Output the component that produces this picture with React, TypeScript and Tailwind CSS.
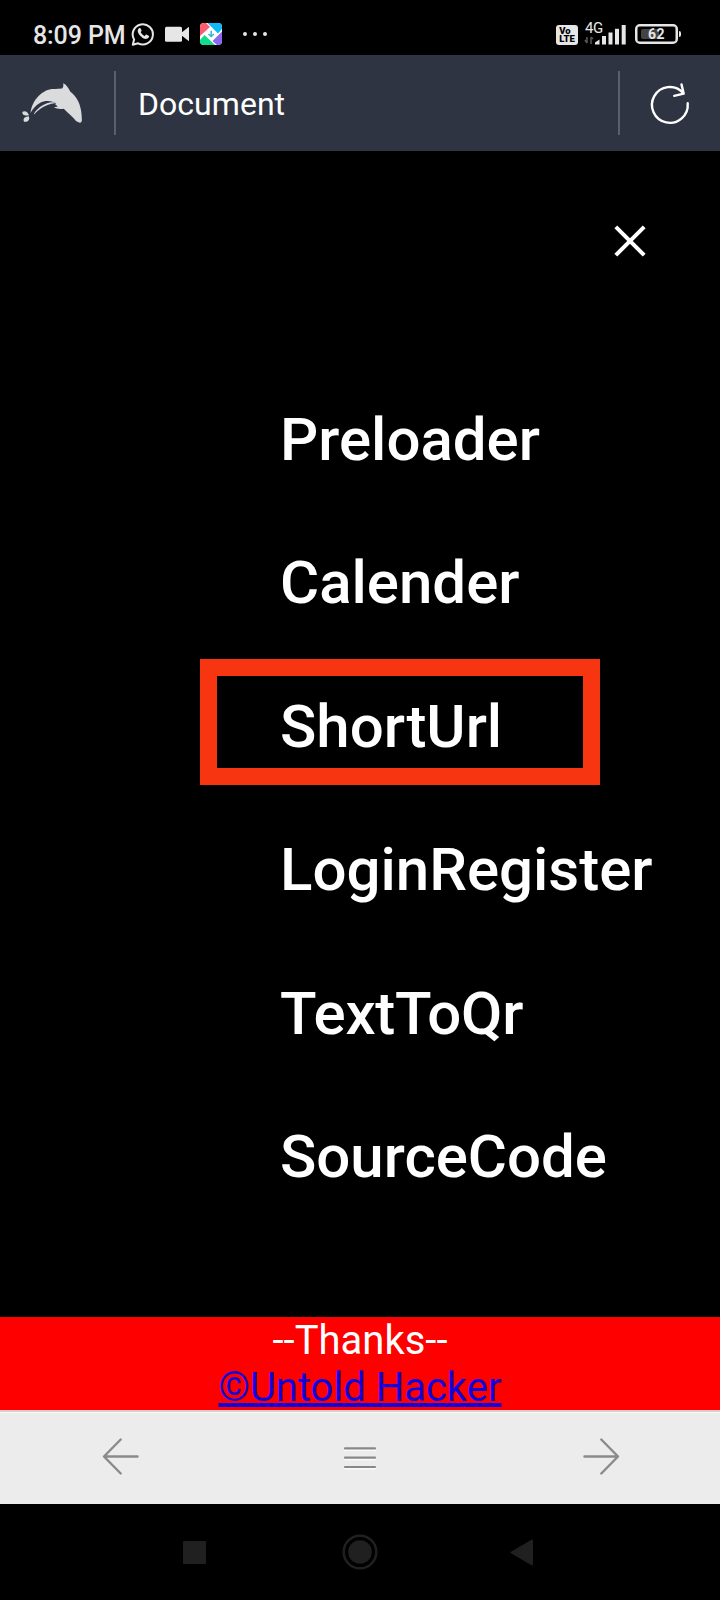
const links = ["Preloader", "Calender", "ShortUrl", "LoginRegister", "TextToQr", "SourceCode"];

function StatusBar() {
  return (
    <div className="flex h-[55px] shrink-0 items-start justify-between bg-black pl-[33px] pr-[39px] text-[#e6e6e6]">
      <div className="flex">
        <span className="mt-[21px] w-[98px] whitespace-nowrap text-[25px] leading-[29px] font-medium tracking-[-0.1px]">8:09 PM</span>
        <svg className="mt-5 h-[28px] w-[26px]" viewBox="131 20 26 28" fill="none">
          <path d="M132.800 44.700l1.300-5.200a10.100 10.100 0 1 1 4 3.800z" stroke="#e6e6e6" strokeWidth="2" strokeLinejoin="round" />
          <path d="M139.400 28.100c-3 2.200-1.500 5.200 1.100 8 3 3.200 6.400 4 8.300 1.200.6-.9.3-1.300-.2-1.600l-2.200-1.100c-1-.4-1.200 1.500-2 1.300-1.200-.4-3.400-2.500-3.800-3.800 0-.5 1.200-1 1-1.700l-1.100-2.200q-.4-.5-1.100-.1z" fill="#e6e6e6" />
        </svg>
        <svg className="mt-[26px] ml-2 h-4 w-6" viewBox="0 0 24 16" fill="#e6e6e6">
          <rect y="0.700" width="17" height="15" rx="1.500" />
          <path d="M16 7l8-6.200v14.400L16 9z" />
        </svg>
        <svg className="mt-[23px] ml-[11px] h-[22px] w-[22px]" viewBox="0 0 22 22">
          <defs>
            <clipPath id="share-clip"><rect width="22" height="22" rx="4" /></clipPath>
          </defs>
          <g clipPath="url(#share-clip)">
            <rect width="22" height="22" fill="#fff" />
            <path d="M0 0h6l4 4L0 13z" fill="#fb5d70" />
            <path d="M7.500 0H22v6l-4 4.500z" fill="#10baf8" />
            <path d="M22 8.500V22h-5l-4.500-4z" fill="#8b68f2" />
            <path d="M0 17l4.500-5L15 22H0z" fill="#10dc8b" />
            <path d="M11.200 7.700v5.500M8.500 11l2.700 2.500 2.700-2.500" fill="none" stroke="#32b8cb" strokeWidth="1.500" />
          </g>
        </svg>
        <svg className="mt-[31px] ml-5 h-[6px] w-[26px]" viewBox="0 0 26 6" fill="#e6e6e6">
          <circle cx="3" cy="3" r="2" /><circle cx="13" cy="3" r="2" /><circle cx="23" cy="3" r="2" />
        </svg>
      </div>
      <div className="flex">
        <div className="mt-[25px] flex h-[20px] w-[22px] flex-col items-center rounded-[3px] bg-[#e6e6e6] pt-[2px] text-[9.5px] leading-[8px] font-black text-black">
          <span className="-translate-x-[2px]">Vo</span><span>LTE</span>
        </div>
        <div className="relative ml-[6px] h-[55px] w-[43px]">
          <span className="absolute top-[20px] left-[1px] text-[15px] leading-[16px] tracking-[-0.5px]">4G</span>
          <svg className="mt-[24px] h-[22px] w-[43px]" viewBox="0 0 43 22" fill="#e6e6e6">
            <path d="M3 13v6M1 16l2 3M7 20v-7M9 15l-2-2" stroke="#555" strokeWidth="1.600" fill="none" />
            <path d="M11 20.500v-2l4.500-3v5z" />
            <rect x="18" y="12" width="4" height="8.500" />
            <rect x="24.500" y="8.500" width="4" height="12" />
            <rect x="31" y="4.800" width="4" height="15.700" />
            <rect x="37.700" y="1" width="4" height="19.500" />
          </svg>
        </div>
        <div className="relative mt-6 ml-[8px] flex h-5 w-[43px] items-center rounded-[5px] border-2 border-[#e6e6e6] pl-1 shadow-[inset_0_0_0_0.500px_#e6e6e6]">
          <div className="h-[10px] w-[18px] rounded-[2px] bg-[#444]" />
          <span className="absolute inset-0 text-center text-[14px] leading-[16px] font-bold tracking-[0.500px]">62</span>
        </div>
        <div className="mt-[31px] ml-px h-[6px] w-[2px] rounded-r bg-[#e6e6e6]" />
      </div>
    </div>
  );
}

function AddressBar() {
  return (
    <div className="flex h-24 shrink-0 items-center bg-[#2e3441]">
      <svg className="h-24 w-[114px]" viewBox="0 55 114 96" fill="#dadbdd">
        <path d="M30.500 113C32 99 44 88 55 89l7-.4c1.500-1.200 1.500-3 1.200-5.300 3.200 1.500 5 4.200 7 8.200 6.500 5 10.700 12.500 11.400 23.500l.2 3.500c.2 2-.1 4-1.200 4.100-1.600.3-3.100-.8-4.600-1.600-3-4.200-8-7.500-12.200-12.300-3.300.5-7.400.2-9.900-1.500l4-.7-3-2.500 1.500-.6c-4-2.400-11-3.500-16.500-.3-4.500 2.600-7 5.800-9.400 9.900z" />
        <path d="M34 113.500c4-6 9.500-9.800 16-11 3-.5 5.500-.3 8 .6-9 .3-17 3.900-24 11.400z" />
        <path d="M29 115.300c-1.500-4.500-4.500-4.600-6.600-3.500-.5 3 1.600 4.500 6.600 3.500z" />
        <path d="M28.700 116.200c1.700 3.800-1 6-4.700 5.500-1.600-3.700 1.300-5.100 4.700-5.500z" />
      </svg>
      <div className="h-16 w-[2px] bg-[#5a606b]" />
      <span className="ml-[22px] flex-1 pt-[1px] text-[32px] leading-[38px] tracking-[0.040px] text-white">Document</span>
      <div className="h-16 w-[2px] bg-[#5a606b]" />
      <svg className="h-24 w-[100px]" viewBox="620 55 100 96" fill="none" stroke="#fff" strokeWidth="2.400" strokeLinecap="round" strokeLinejoin="round">
        <path d="M687.700 103.300A17.900 17.900 0 1 1 682.900 92.600" />
        <path d="M681.500 84.400l2.200 9.300-9.500 2.100" />
      </svg>
    </div>
  );
}

function MenuOverlay() {
  return (
    <main className="flex h-[1166px] shrink-0 flex-col bg-black">
      <div className="flex h-[217px] justify-end pt-[74px] pr-[74px]">
        <svg className="h-8 w-8" viewBox="0 0 32 32" stroke="#fff" strokeWidth="4">
          <path d="M1.800 1.800l28.400 28.400M30.200 1.800L1.800 30.200" />
        </svg>
      </div>
      <nav className="flex flex-col pl-[280px]">
        {links.map((label) => (
          <a
            key={label}
            className={`relative h-[143.400px] text-[60px] leading-[143.400px] font-medium whitespace-nowrap text-white ${label === "TextToQr" ? "tracking-[-0.250px]" : ""}`}
          >
            {label}
            {label === "ShortUrl" && (
              <span className="absolute top-[4px] left-[-80px] h-[126.500px] w-[400px] border-[17px] border-[#f73511]" />
            )}
          </a>
        ))}
      </nav>
    </main>
  );
}

function BrowserBar() {
  return (
    <div className="flex h-[94px] shrink-0 items-center justify-between border-t-2 border-[#ddcdca] bg-[#ececec] pr-[99px] pl-[101px] shadow-[inset_0_1px_0_#fafafa]">
      <svg className="h-[40px] w-[40px]" viewBox="0 0 40 40" fill="none" stroke="#8a8a8a" strokeWidth="2.400" strokeLinecap="round" strokeLinejoin="round">
        <path d="M36.500 18.500H3.500M19.700 1.500L3 18.500l16.700 17" />
      </svg>
      <svg className="h-[40px] w-[40px] -ml-[2px]" viewBox="0 0 40 40" fill="none" strokeLinecap="round">
        <path d="M5 12h30M5 21.300h30M5 30.500h30" stroke="#fafafa" strokeWidth="2" />
        <path d="M5 10.400h30M5 19.700h30M5 29h30" stroke="#888" strokeWidth="2.200" />
      </svg>
      <svg className="h-[40px] w-[40px]" viewBox="0 0 40 40" fill="none" stroke="#8a8a8a" strokeWidth="2.400" strokeLinecap="round" strokeLinejoin="round">
        <path d="M3.500 18.500h33M20.300 1.500l16.700 17-16.700 17" />
      </svg>
    </div>
  );
}

function SystemNav() {
  return (
    <div className="flex h-24 shrink-0 items-center justify-between bg-black pr-[187px] pl-[183px]">
      <div className="size-[23px] rounded-[1px] bg-[#202020]" />
      <svg className="ml-[4px] size-[36px]" viewBox="0 0 36 36">
        <circle cx="18" cy="18" r="16.300" fill="none" stroke="#202020" strokeWidth="2.500" />
        <circle cx="18" cy="18" r="11.800" fill="#202020" />
      </svg>
      <svg className="h-[27px] w-[23px]" viewBox="0 0 23 27" fill="#202020" stroke="#202020" strokeWidth="2" strokeLinejoin="round">
        <path d="M22 1.500v24L1.500 13.500z" />
      </svg>
    </div>
  );
}

export default function App() {
  return (
    <div className="flex h-[1600px] w-[720px] flex-col overflow-hidden bg-black font-[Roboto,sans-serif]">
      <StatusBar />
      <AddressBar />
      <MenuOverlay />
      <footer className="h-[93px] shrink-0 bg-[#ff0000] text-center text-[40px] leading-[47px] text-white">
        <div>--Thanks--</div>
        <a className="block text-[#1100dd] underline">©Untold Hacker</a>
      </footer>
      <BrowserBar />
      <SystemNav />
    </div>
  );
}
